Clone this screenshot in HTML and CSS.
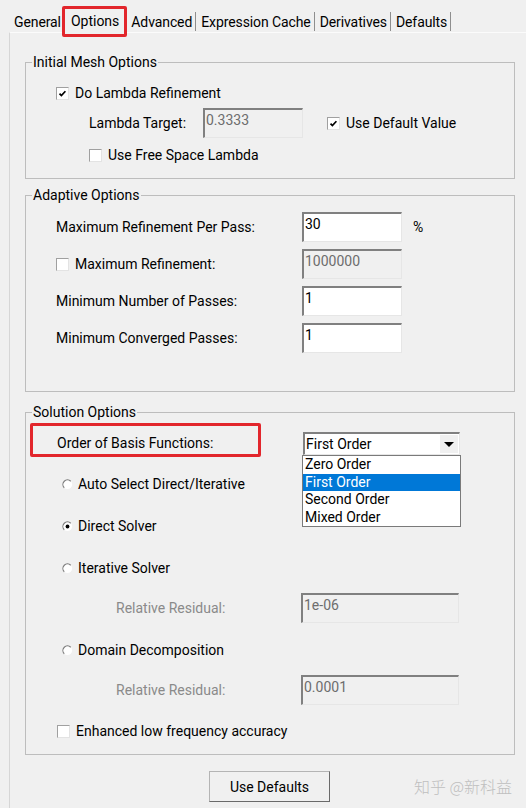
FILE: index.html
```html
<!DOCTYPE html>
<html lang="en">
<head>
<meta charset="utf-8">
<title>Options</title>
<link rel="stylesheet" href="styles.css">
</head>
<body>
<div class="window">
  <div class="tabs">
    <div class="tab">General</div>
    <div class="tab tab-active">Options</div>
    <div class="tab">Advanced</div>
    <div class="tab">Expression Cache</div>
    <div class="tab">Derivatives</div>
    <div class="tab">Defaults</div>
  </div>

  <div class="panel">
    <fieldset class="group">
      <legend>Initial Mesh Options</legend>
      <div class="group-body mesh-body">
        <div class="row">
          <span class="check"><svg viewBox="0 0 9 9"><polyline points="1.5,4.6 3.4,6.6 7.4,2.2"/></svg></span>
          <span>Do Lambda Refinement</span>
        </div>
        <div class="row row-field mesh-target">
          <span class="lambda-label">Lambda Target:</span>
          <input class="field" type="text" value="0.3333" disabled>
          <span class="check default-check"><svg viewBox="0 0 9 9"><polyline points="1.5,4.6 3.4,6.6 7.4,2.2"/></svg></span>
          <span>Use Default Value</span>
        </div>
        <div class="row mesh-free">
          <span class="check"></span>
          <span>Use Free Space Lambda</span>
        </div>
      </div>
    </fieldset>

    <fieldset class="group group-adaptive">
      <legend>Adaptive Options</legend>
      <div class="group-body adaptive-body">
        <div class="row row-field">
          <span class="adaptive-label">Maximum Refinement Per Pass:</span>
          <input class="field" type="text" value="30">
          <span class="unit">%</span>
        </div>
        <div class="row row-field">
          <span class="adaptive-label"><span class="check"></span>Maximum Refinement:</span>
          <input class="field" type="text" value="1000000" disabled>
        </div>
        <div class="row row-field">
          <span class="adaptive-label">Minimum Number of Passes:</span>
          <input class="field" type="text" value="1">
        </div>
        <div class="row row-field">
          <span class="adaptive-label">Minimum Converged Passes:</span>
          <input class="field" type="text" value="1">
        </div>
      </div>
    </fieldset>

    <fieldset class="group group-solution">
      <legend>Solution Options</legend>
      <div class="group-body solution-body">
        <div class="basis-row">
          <span class="basis-label">Order of Basis Functions:</span>
          <div class="combo">
            <span class="combo-value">First Order</span>
            <span class="combo-btn"><svg viewBox="0 0 10 5"><polygon points="0,0 10,0 5,5"/></svg></span>
            <ul class="dropdown">
              <li>Zero Order</li>
              <li class="selected">First Order</li>
              <li>Second Order</li>
              <li>Mixed Order</li>
            </ul>
          </div>
        </div>

        <div class="row row-field row-radio">
          <svg class="radio" viewBox="0 0 12 12"><circle cx="6" cy="6" r="5" class="radio-face"/><path d="M9.54 2.46 A5 5 0 0 0 2.46 9.54" class="radio-rim"/></svg>
          <span>Auto Select Direct/Iterative</span>
        </div>
        <div class="row row-field row-radio">
          <svg class="radio" viewBox="0 0 12 12"><circle cx="6" cy="6" r="5" class="radio-face"/><path d="M9.54 2.46 A5 5 0 0 0 2.46 9.54" class="radio-rim"/><circle cx="6" cy="6" r="2.1" class="radio-dot"/></svg>
          <span>Direct Solver</span>
        </div>
        <div class="row row-field row-radio">
          <svg class="radio" viewBox="0 0 12 12"><circle cx="6" cy="6" r="5" class="radio-face"/><path d="M9.54 2.46 A5 5 0 0 0 2.46 9.54" class="radio-rim"/></svg>
          <span>Iterative Solver</span>
        </div>
        <div class="row row-field row-sub">
          <span class="sub-label">Relative Residual:</span>
          <input class="field field-wide" type="text" value="1e-06" disabled>
        </div>
        <div class="row row-field row-radio">
          <svg class="radio" viewBox="0 0 12 12"><circle cx="6" cy="6" r="5" class="radio-face"/><path d="M9.54 2.46 A5 5 0 0 0 2.46 9.54" class="radio-rim"/></svg>
          <span>Domain Decomposition</span>
        </div>
        <div class="row row-field row-sub">
          <span class="sub-label">Relative Residual:</span>
          <input class="field field-wide" type="text" value="0.0001" disabled>
        </div>
        <div class="row row-field row-enhanced">
          <span class="check"></span>
          <span>Enhanced low frequency accuracy</span>
        </div>
      </div>
    </fieldset>

    <div class="actions">
      <button class="button" type="button">Use Defaults</button>
    </div>
  </div>

  <div class="watermark">知乎 @新科益</div>
</div>
</body>
</html>
```

FILE: styles.css
```css
* {
  box-sizing: border-box;
}

body {
  margin: 0;
  background: #f0f0f0;
  color: #000;
  font-family: Roboto, "Liberation Sans", Arial, sans-serif;
  font-size: 14px;
}

.window {
  position: relative;
  height: 808px;
  display: flex;
  flex-direction: column;
  overflow: hidden;
}

/* ---- tab strip ---- */
.tabs {
  flex: none;
  display: flex;
  align-items: flex-end;
  height: 32px;
  padding-left: 9px;
}

.tab {
  height: 19px;
  margin-bottom: 1px;
  padding: 0 3px 0 5px;
  line-height: 20px;
  border-right: 1px solid #8e8e8e;
  white-space: nowrap;
  letter-spacing: -0.1px;
}

.tab-active {
  position: relative;
  z-index: 1;
  height: 31px;
  margin: 0 -1px -5px -3px;
  padding: 0 5px 1px 6px;
  line-height: 24px;
  border: 3px solid #e2262c;
  border-radius: 2px;
  background: #f0f0f0;
  letter-spacing: 0;
}

/* ---- tab page ---- */
.panel {
  flex: 1;
  display: flex;
  flex-direction: column;
  align-items: flex-start;
  margin-left: 9px;
  padding: 21px 0 0 15px;
  border-top: 1px solid #fbfbfb;
  border-left: 1px solid #d6d6d6;
}

.group {
  width: 490px;
  min-width: 0;
  margin: 0;
  padding: 0;
  border: 1px solid #bdbdbd;
}

.group legend {
  margin-left: 6px;
  padding: 0 1px;
  line-height: 16px;
}

.group-adaptive {
  margin-top: 8px;
}

.group-solution {
  margin-top: 12px;
}

.group-body {
  display: flex;
  flex-direction: column;
  align-items: flex-start;
}

.mesh-body {
  padding: 13px 0 13px 30px;
}

.adaptive-body {
  padding: 9px 0 38px 30px;
  gap: 7px;
}

.solution-body {
  padding: 3px 0 8px 0;
}

.row {
  display: flex;
  align-items: center;
  height: 20px;
  white-space: nowrap;
}

.row-field {
  height: 30px;
}

/* ---- checkboxes ---- */
.check {
  flex: none;
  display: inline-flex;
  align-items: center;
  justify-content: center;
  width: 13px;
  height: 13px;
  margin-right: 6px;
  border: 1px solid;
  border-color: #a0a0a0 #e3e3e3 #e3e3e3 #a0a0a0;
  background: #fff;
}

.check svg {
  width: 9px;
  height: 9px;
}

.check polyline {
  fill: none;
  stroke: #000;
  stroke-width: 1.7;
}

/* ---- text fields ---- */
.field {
  width: 100px;
  height: 30px;
  margin: 0;
  padding: 0 0 8px 1px;
  border-style: solid;
  border-width: 2px 1px 1px 2px;
  border-color: #808080 #e6e6e6 #e6e6e6 #808080;
  border-radius: 0;
  background: #fff;
  color: #000;
  font: inherit;
  outline: none;
}

.field:disabled {
  background: #f0f0f0;
  color: #6d6d6d;
}

.field-wide {
  width: 158px;
}

/* initial mesh */
.mesh-target {
  margin-top: 5px;
}

.lambda-label {
  width: 114px;
  margin-left: 33px;
}

.default-check {
  margin-left: 24px;
}

.mesh-free {
  margin-top: 7px;
  padding-left: 33px;
}

/* adaptive */
.adaptive-label {
  display: flex;
  align-items: center;
  width: 246px;
}

.unit {
  margin-left: 11px;
}

/* ---- solution ---- */
.basis-row {
  display: flex;
  align-items: flex-start;
  height: 34px;
  margin-left: 4px;
}

.basis-label {
  width: 231px;
  height: 34px;
  padding: 7px 0 0 24px;
  line-height: 20px;
  border: 3px solid #e2262c;
  border-radius: 2px;
}

.combo {
  position: relative;
  z-index: 2;
  display: flex;
  align-items: center;
  width: 157px;
  height: 23px;
  margin: 9px 0 0 42px;
  padding-left: 1px;
  border-style: solid;
  border-width: 2px 1px 1px 2px;
  border-color: #808080 #e6e6e6 #e6e6e6 #808080;
  background: #fff;
}

.combo-btn {
  display: flex;
  align-items: center;
  justify-content: center;
  width: 18px;
  height: 18px;
  margin-left: auto;
  margin-right: 1px;
  background: #f0f0f0;
}

.combo-btn svg {
  width: 10px;
  height: 5px;
}

.combo-btn polygon {
  fill: #000;
}

.dropdown {
  position: absolute;
  top: 21px;
  left: -3px;
  width: 159px;
  height: 72px;
  margin: 0;
  padding: 0;
  list-style: none;
  border: 1px solid #7a7a7a;
  background: #fff;
}

.dropdown li {
  height: 17.5px;
  padding-left: 2px;
  line-height: 17.5px;
}

.dropdown .selected {
  background: #0078d7;
  color: #fff;
}

.row-radio {
  margin-top: 12px;
  margin-left: 36px;
}

.radio {
  flex: none;
  width: 11px;
  height: 11px;
  margin-right: 5px;
}

.radio-face {
  fill: #fff;
}

.radio-rim {
  fill: none;
  stroke: #7a7a7a;
  stroke-width: 1.2;
}

.radio-dot {
  fill: #000;
}

.row-sub {
  margin-top: 10px;
  margin-left: 90px;
}

.sub-label {
  width: 185px;
  color: #8a8a8a;
}

.row-enhanced {
  margin-top: 11px;
  margin-left: 31px;
}

/* ---- footer ---- */
.actions {
  margin: 16px 0 0 184px;
}

.button {
  width: 121px;
  height: 31px;
  padding: 0;
  border: 1px solid;
  border-color: #b4b4b4 #6a6a6a #6a6a6a #b4b4b4;
  border-radius: 0;
  background: #f0f0f0;
  color: #000;
  font: inherit;
}

.watermark {
  position: absolute;
  right: 14px;
  bottom: 12px;
  line-height: 20px;
  font-family: "Noto Sans CJK SC", sans-serif;
  font-size: 16px;
  font-weight: 300;
  color: #bfbfbf;
}
```
